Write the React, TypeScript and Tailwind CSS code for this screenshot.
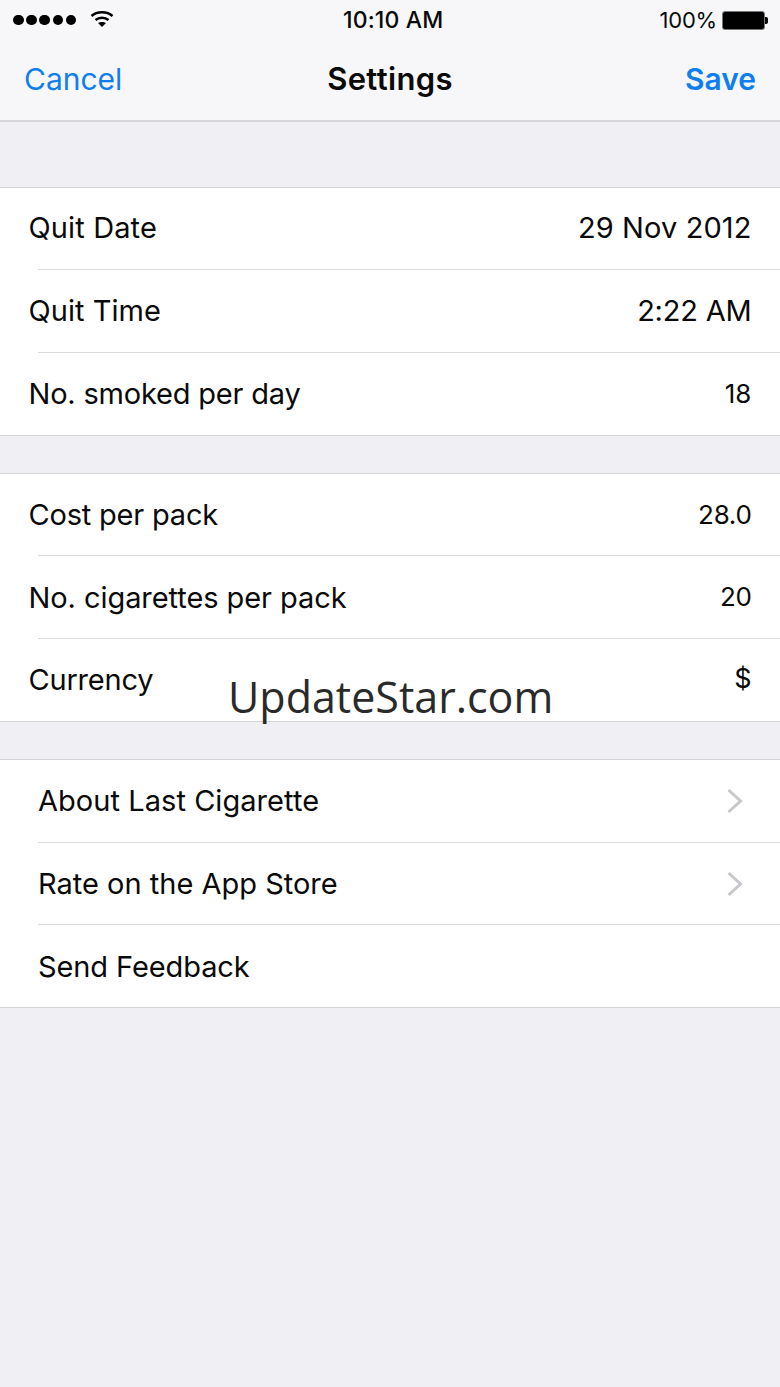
const font = "font-['Inter',sans-serif]";

type RowProps = {
  label: string;
  value?: string;
  small?: boolean;
  last?: boolean;
  chevron?: boolean;
  tall?: boolean;
  indent?: boolean;
  labelTrack?: string;
  valueTrack?: string;
  nudge?: string;
};

function Row({ label, value, small, last, chevron, tall, indent, labelTrack = "tracking-[-0.05px]", valueTrack = "tracking-[0.05px]", nudge = "pb-[2px]" }: RowProps) {
  return (
    <div className={`relative flex items-center justify-between pr-[28.5px] ${nudge} ${tall ? "h-[83px]" : "h-[82px]"} ${indent ? "pl-[38px]" : "pl-[28.5px]"}`}>
      <span className={`text-[29px] text-[#0a0a0a] ${labelTrack}`}>{label}</span>
      {value && <span className={`text-[#0a0a0a] ${valueTrack} ${small ? "text-[26px] -translate-y-px" : "text-[29px]"}`}>{value}</span>}
      {chevron && (
        <svg width="18" height="26" viewBox="0 0 18 26" className="mr-[7.5px]" fill="none">
          <path d="M2.5 2 L14.5 13 L2.5 24" stroke="#c8c8cc" strokeWidth="3" />
        </svg>
      )}
      {!last && <div className="absolute bottom-0 right-0 left-[38px] h-px bg-[#dcdcdf]" />}
    </div>
  );
}

function Group({ children }: { children: React.ReactNode }) {
  return <div className="bg-white border-y border-[#d4d4d7]">{children}</div>;
}

export default function App() {
  return (
    <div className={`relative w-[780px] h-[1387px] bg-[#efeff4] overflow-hidden ${font}`}>
      <div className="h-[122px] bg-[#f7f7f9] border-b-2 border-[#d6d6d9] flex flex-col">
        <div className="h-[40px] flex items-center justify-between pl-[13px] pr-[12px] relative">
          <div className="flex items-center gap-[14px]">
            <div className="flex gap-[2.7px]">
              {[0, 1, 2, 3, 4].map((i) => (
                <div key={i} className="w-[10.5px] h-[10.5px] rounded-full bg-black" />
              ))}
            </div>
            <svg width="24" height="18" viewBox="0 0 24 18" fill="none" stroke="#000" strokeWidth="2.4" className="-translate-y-px">
              <path d="M1.5 6 C7 1 17 1 22.5 6" />
              <path d="M5.5 10 C9 7 15 7 18.5 10" />
              <path d="M12 17 L8 13 C10 11.5 14 11.5 16 13 Z" fill="#000" stroke="none" />
            </svg>
          </div>
          <span className="absolute left-[343px] top-[6px] text-[23px] leading-[28px] font-medium text-[#0a0a0a] tracking-[0.15px]">10:10 AM</span>
          <div className="flex items-center gap-[5px]">
            <span className="text-[22px] leading-[28px] text-[#0a0a0a] tracking-[-0.2px]">100%</span>
            <div className="flex items-center">
              <div className="w-[43px] h-[19px] bg-black rounded-[3px] border border-[#777]" />
              <div className="w-[3px] h-[7px] bg-black rounded-r-[2px]" />
            </div>
          </div>
        </div>
        <div className="flex-1 relative flex items-center justify-between px-[24px] pb-[2px]">
          <span className="text-[30px] text-[#0f7fef]">Cancel</span>
          <span className="absolute left-0 right-0 text-center text-[31px] font-semibold text-[#0a0a0a] tracking-[0.35px]">Settings</span>
          <span className="text-[30px] font-semibold text-[#0f7fef]">Save</span>
        </div>
      </div>
      <div className="pt-[65px] flex flex-col gap-[37px]">
        <Group>
          <Row label="Quit Date" labelTrack="tracking-[0.13px]" value="29 Nov 2012" valueTrack="tracking-[0.1px]" />
          <Row tall label="Quit Time" labelTrack="tracking-[0.05px]" value="2:22 AM" valueTrack="tracking-[-0.2px]" />
          <Row nudge="pb-0" label="No. smoked per day" labelTrack="tracking-[-0.2px]" value="18" valueTrack="tracking-[0.1px]" small last />
        </Group>
        <Group>
          <Row nudge="pb-0" label="Cost per pack" labelTrack="tracking-[-0.2px]" value="28.0" valueTrack="tracking-[-0.3px]" small />
          <Row nudge="pb-0" tall label="No. cigarettes per pack" labelTrack="tracking-[-0.07px]" value="20" valueTrack="tracking-[-0.4px]" small />
          <Row nudge="pb-0" label="Currency" labelTrack="tracking-[-0.2px]" value="$" valueTrack="tracking-[0px] text-[27px]" small last />
        </Group>
        <Group>
          <Row tall indent label="About Last Cigarette" labelTrack="tracking-[0.05px]" chevron />
          <Row nudge="pb-0" indent label="Rate on the App Store" labelTrack="tracking-[0px]" chevron />
          <Row nudge="pt-[2px]" indent label="Send Feedback" labelTrack="tracking-[-0.1px]" last />
        </Group>
      </div>
      <span className="absolute left-[228px] top-[668px] text-[43px] leading-[58px] text-[#2a2a2a] font-['Open_Sans',sans-serif]">UpdateStar.com</span>
    </div>
  );
}
